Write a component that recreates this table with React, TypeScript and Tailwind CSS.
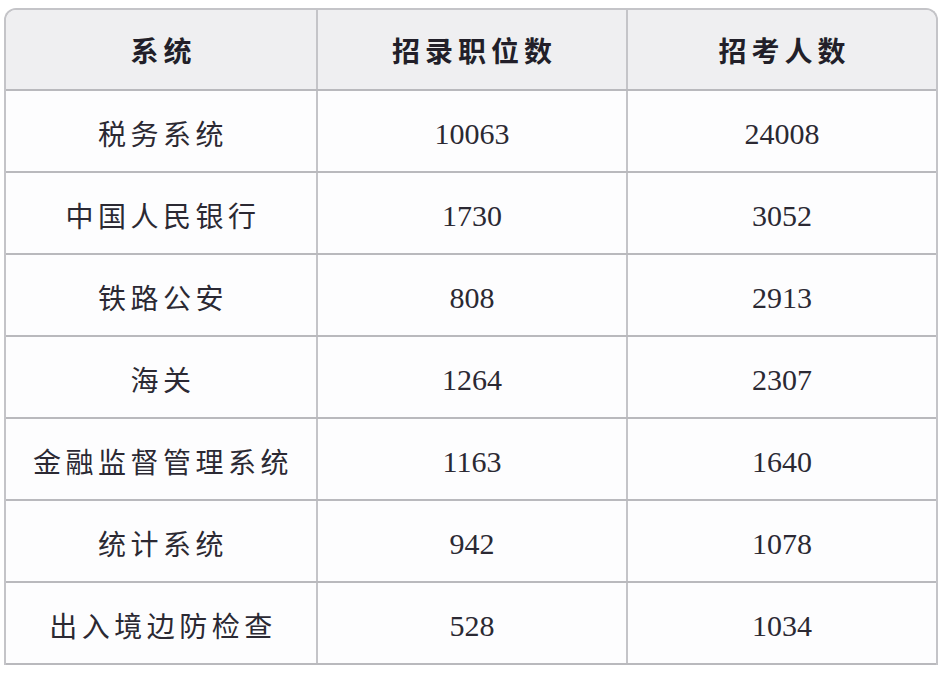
import React from 'react';

const rows: [string, string, string][] = [
  ['税务系统', '10063', '24008'],
  ['中国人民银行', '1730', '3052'],
  ['铁路公安', '808', '2913'],
  ['海关', '1264', '2307'],
  ['金融监督管理系统', '1163', '1640'],
  ['统计系统', '942', '1078'],
  ['出入境边防检查', '528', '1034'],
];

const cjk = '"Noto Sans CJK SC", "Noto Sans", sans-serif';
const num = '"Liberation Serif", "Noto Sans CJK SC", serif';

export default function App() {
  return (
    <div className="w-[946px] h-[674px] bg-white overflow-hidden pt-2 pl-1">
      <div className="w-[934px] rounded-t-[12px] border-x-2 border-t-2 border-[#c4c4c8] overflow-hidden">
        {/* header */}
        <div className="grid grid-cols-3 h-[79px] bg-[#efeff1] text-[#221f29]">
          {['系统', '招录职位数', '招考人数'].map((h, i) => (
            <div
              key={h}
              className={`flex items-center justify-center text-[28px] font-semibold tracking-[5px] pl-[5px] ${i > 0 ? 'border-l-2 border-[#c4c4c8]' : ''}`}
              style={{ fontFamily: cjk }}
            >
              {h}
            </div>
          ))}
        </div>
        {/* body */}
        {rows.map(([name, a, b]) => (
          <div key={name} className="grid grid-cols-3 h-[82px] bg-[#fdfdfe] border-t-2 border-[#b9b9bd] text-[#2b2933]">
            <div
              className="flex items-center justify-center pt-1 text-[28px] tracking-[4.5px] pl-[4px]"
              style={{ fontFamily: cjk }}
            >
              {name}
            </div>
            <div
              className="flex items-center justify-center pt-1 border-l-2 border-[#c4c4c8] text-[30px]"
              style={{ fontFamily: num }}
            >
              {a}
            </div>
            <div
              className="flex items-center justify-center pt-1 border-l-2 border-[#c4c4c8] text-[30px]"
              style={{ fontFamily: num }}
            >
              {b}
            </div>
          </div>
        ))}
        <div className="h-[2px] bg-[#b9b9bd]" />
      </div>
    </div>
  );
}
